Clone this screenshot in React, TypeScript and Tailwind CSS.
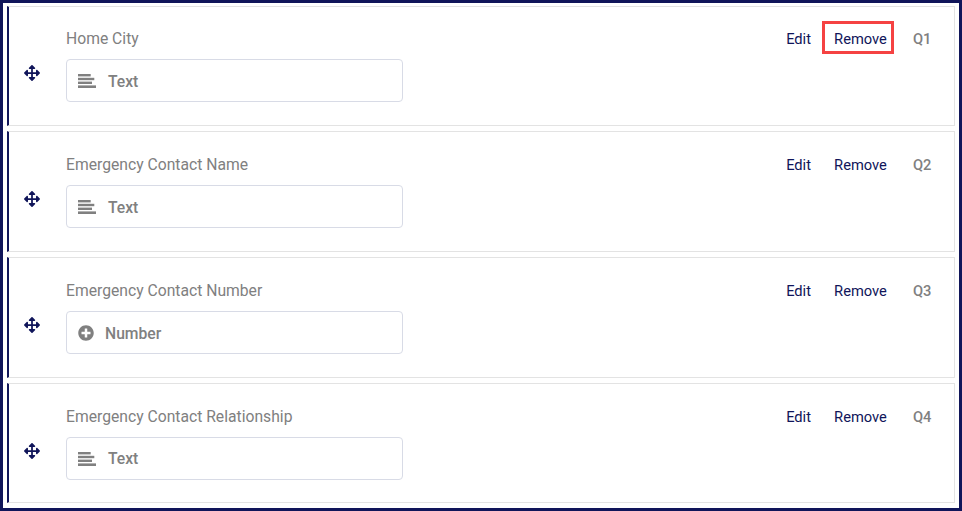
import { FaArrowsAlt, FaPlusCircle } from "react-icons/fa";

function LinesIcon() {
  return (
    <svg width="18" height="14" viewBox="0 0 18 14" className="shrink-0" fill="#808080">
      <rect x="0" y="0" width="12.7" height="2.4" />
      <rect x="0" y="3.8" width="16.3" height="2.4" />
      <rect x="0" y="7.6" width="14" height="2.4" />
      <rect x="0" y="11.4" width="18" height="2.6" />
    </svg>
  );
}

type Q = { label: string; kind: string; q: string; first?: boolean; last?: boolean };

const rows: Q[] = [
  { label: "Home City", kind: "Text", q: "Q1", first: true },
  { label: "Emergency Contact Name", kind: "Text", q: "Q2" },
  { label: "Emergency Contact Number", kind: "Number", q: "Q3" },
  { label: "Emergency Contact Relationship", kind: "Text", q: "Q4", last: true },
];

function Row({ r }: { r: Q }) {
  return (
    <div
      className={`flex border-l-2 border-l-[#10155a] border-y border-r border-y-[#e3e3e3] border-r-[#e3e3e3] ${
        r.first || r.last ? "h-[120px]" : "h-[121px]"
      }`}
    >
      <div className={`flex w-[57px] shrink-0 pl-[15px] ${r.first ? "pt-[58px]" : "pt-[59px]"}`}>
        <FaArrowsAlt className="text-[#10155a]" size={16} />
      </div>
      <div className={`flex-1 ${r.first ? "pt-[21px]" : "pt-[22px]"}`}>
        <div className="text-[15.7px] leading-[22px] text-[#808080]">{r.label}</div>
        <div className="mt-[9px] flex h-[43px] w-[337px] items-center rounded border border-[#d8dbe6] pl-[11px]">
          {r.kind === "Number" ? (
            <>
              <FaPlusCircle className="text-[#808080]" size={16} />
              <span className="ml-[11px] translate-y-px text-[15.7px] font-medium text-[#808080]">{r.kind}</span>
            </>
          ) : (
            <>
              <LinesIcon />
              <span
                className={`ml-[12px] text-[15.7px] font-medium text-[#808080] ${r.last ? "" : "translate-y-px"}`}
              >
                {r.kind}
              </span>
            </>
          )}
        </div>
      </div>
      <div
        className={`flex h-fit items-center pr-[23px] text-[14.7px] font-[450] text-[#10155a] ${
          r.first ? "pt-[14px]" : "pt-[15px]"
        }`}
      >
        <span className="mr-[11px] translate-y-[2px]">Edit</span>
        <span
          className={`flex h-[33px] w-[72px] items-center justify-center pl-[5px] ${
            r.first ? "border-[3px] border-[#f54242]" : ""
          }`}
        >
          <span className="translate-y-[2px]">Remove</span>
        </span>
        <span className="ml-[19px] w-[18px] translate-y-[2px] font-medium text-[#808080]">{r.q}</span>
      </div>
    </div>
  );
}

export default function App() {
  return (
    <div
      className="flex h-[511px] w-[962px] flex-col gap-[5px] border-[3px] border-[#10155a] bg-white pb-[5px] pl-[4px] pr-[4px] pt-[3px]"
      style={{ fontFamily: "Roboto, sans-serif" }}
    >
      {rows.map((r) => (
        <Row key={r.q} r={r} />
      ))}
    </div>
  );
}
